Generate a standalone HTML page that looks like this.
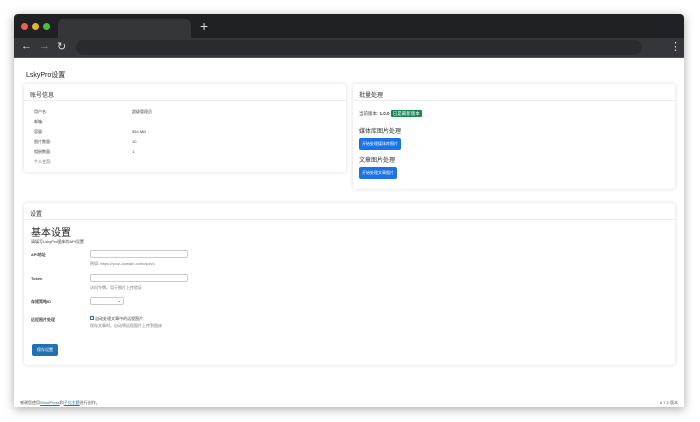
<!DOCTYPE html><html><head><meta charset="utf-8"><style>
*{box-sizing:border-box;margin:0;padding:0}
body{width:700px;height:422px;background:#fff;font-family:"Liberation Sans","Noto Sans CJK SC",sans-serif;position:relative;overflow:hidden;color:#333}
.win{position:absolute;left:14px;top:14px;width:670px;height:393px;background:#fff;box-shadow:0 2px 10px rgba(0,0,0,.35);border-radius:4px 4px 0 0;overflow:hidden}
.tabbar{height:24px;background:#202124;position:relative}
.dot{position:absolute;top:9px;width:7px;height:7px;border-radius:50%}
.tab{position:absolute;left:44px;top:5px;width:133px;height:19px;background:#35363a;border-radius:5px 5px 0 0}
.plus{position:absolute;left:186px;top:4px;color:#ddd;font-size:14px}
.tool{height:20px;background:#35363a;position:relative;border-bottom:1px solid #555}
.url{position:absolute;left:62px;top:2px;width:566px;height:15px;background:#2a2b2e;border-radius:8px}
.ic{position:absolute;top:2px;color:#ddd;font-size:11px}
.card{position:absolute;background:#fff;border-radius:3px;box-shadow:0 0 4px rgba(0,0,0,.15)}
.ch{height:17px;border-bottom:1px solid #eee;font-size:6px;padding:6px 6px;color:#333}
.s{font-size:4px;color:#444;position:absolute}
.btn{position:absolute;background:#1a73e8;color:#fff;font-size:4px;padding:3px 3px;border-radius:2px}
.inp{position:absolute;border:1px solid #ccc;border-radius:2px;height:8px}
</style></head><body>
<div class="win">
<div class="tabbar"><div class="dot" style="left:7px;background:#ed5f56"></div><div class="dot" style="left:18px;background:#e3b32d"></div><div class="dot" style="left:29px;background:#4fbe3d"></div><div class="tab"></div><div class="plus">+</div></div>
<div class="tool"><span class="ic" style="left:7px">←</span><span class="ic" style="left:25px;color:#888">→</span><span class="ic" style="left:43px">↻</span><div class="url"></div><span class="ic" style="left:656px">⋮</span></div>
<div style="position:absolute;left:12px;top:56px;font-size:7px;color:#222">LskyPro设置</div>
<div class="card" style="left:10px;top:70px;width:322px;height:88px"><div class="ch">账号信息</div>
<div class="s" style="left:10px;top:25px">用户名:</div><div class="s" style="left:108px;top:25px">超级管理员</div>
<div class="s" style="left:10px;top:35px">邮箱:</div>
<div class="s" style="left:10px;top:45px">容量:</div><div class="s" style="left:108px;top:45px">954 MB</div>
<div class="s" style="left:10px;top:55px">图片数量:</div><div class="s" style="left:108px;top:55px">10</div>
<div class="s" style="left:10px;top:65px">相册数量:</div><div class="s" style="left:108px;top:65px">1</div>
<div class="s" style="left:10px;top:75px">个人主页:</div></div>
<div class="card" style="left:339px;top:70px;width:322px;height:105px"><div class="ch">批量处理</div>
<div class="s" style="left:6px;top:27px;font-size:4.5px">当前版本: <b>1.0.0</b> <span style="background:#198754;color:#fff;padding:1px 2px;border-radius:1px">已是最新版本</span></div>
<div style="position:absolute;left:6px;top:42px;font-size:6px">媒体库图片处理</div>
<div class="btn" style="left:6px;top:54px">开始处理媒体库图片</div>
<div style="position:absolute;left:6px;top:71px;font-size:6px">文章图片处理</div>
<div class="btn" style="left:6px;top:83px">开始处理文章图片</div></div>
<div class="card" style="left:10px;top:189px;width:651px;height:162px"><div class="ch">设置</div>
<div style="position:absolute;left:7px;top:21px;font-size:10px;color:#222">基本设置</div>
<div class="s" style="left:7px;top:36px">请填写LskyPro图床的API设置</div>
<div class="s" style="left:7px;top:49px;font-weight:bold">API地址</div><div class="inp" style="left:66px;top:47px;width:98px"></div><div class="s" style="left:66px;top:58px;color:#777">例如: https://your-domain.com/api/v1</div>
<div class="s" style="left:7px;top:73px;font-weight:bold">Token</div><div class="inp" style="left:66px;top:71px;width:98px"></div><div class="s" style="left:66px;top:82px;color:#777">访问令牌，用于图片上传验证</div>
<div class="s" style="left:7px;top:96px;font-weight:bold">存储策略ID</div><div class="inp" style="left:66px;top:94px;width:34px;font-size:4px;text-align:right;padding-right:2px">⌄</div>
<div class="s" style="left:7px;top:114px;font-weight:bold">远程图片处理</div><div class="s" style="left:66px;top:113px"><span style="display:inline-block;width:4px;height:4px;border:1px solid #2271b1"></span> 自动处理文章中的远程图片</div><div class="s" style="left:66px;top:120px;color:#777">保存文章时，自动将远程图片上传到图床</div>
<div class="btn" style="left:8px;top:141px;background:#2271b1;padding:3px 5px">保存设置</div></div>
<div class="s" style="left:6px;top:386px;color:#555">感谢您使用<span style="color:#2271b1;text-decoration:underline">WordPress</span>和<span style="color:#2271b1;text-decoration:underline">子比主题</span>进行创作。</div>
<div class="s" style="right:6px;top:386px;color:#555">6.7.2 版本</div>
</div>
</body></html>
